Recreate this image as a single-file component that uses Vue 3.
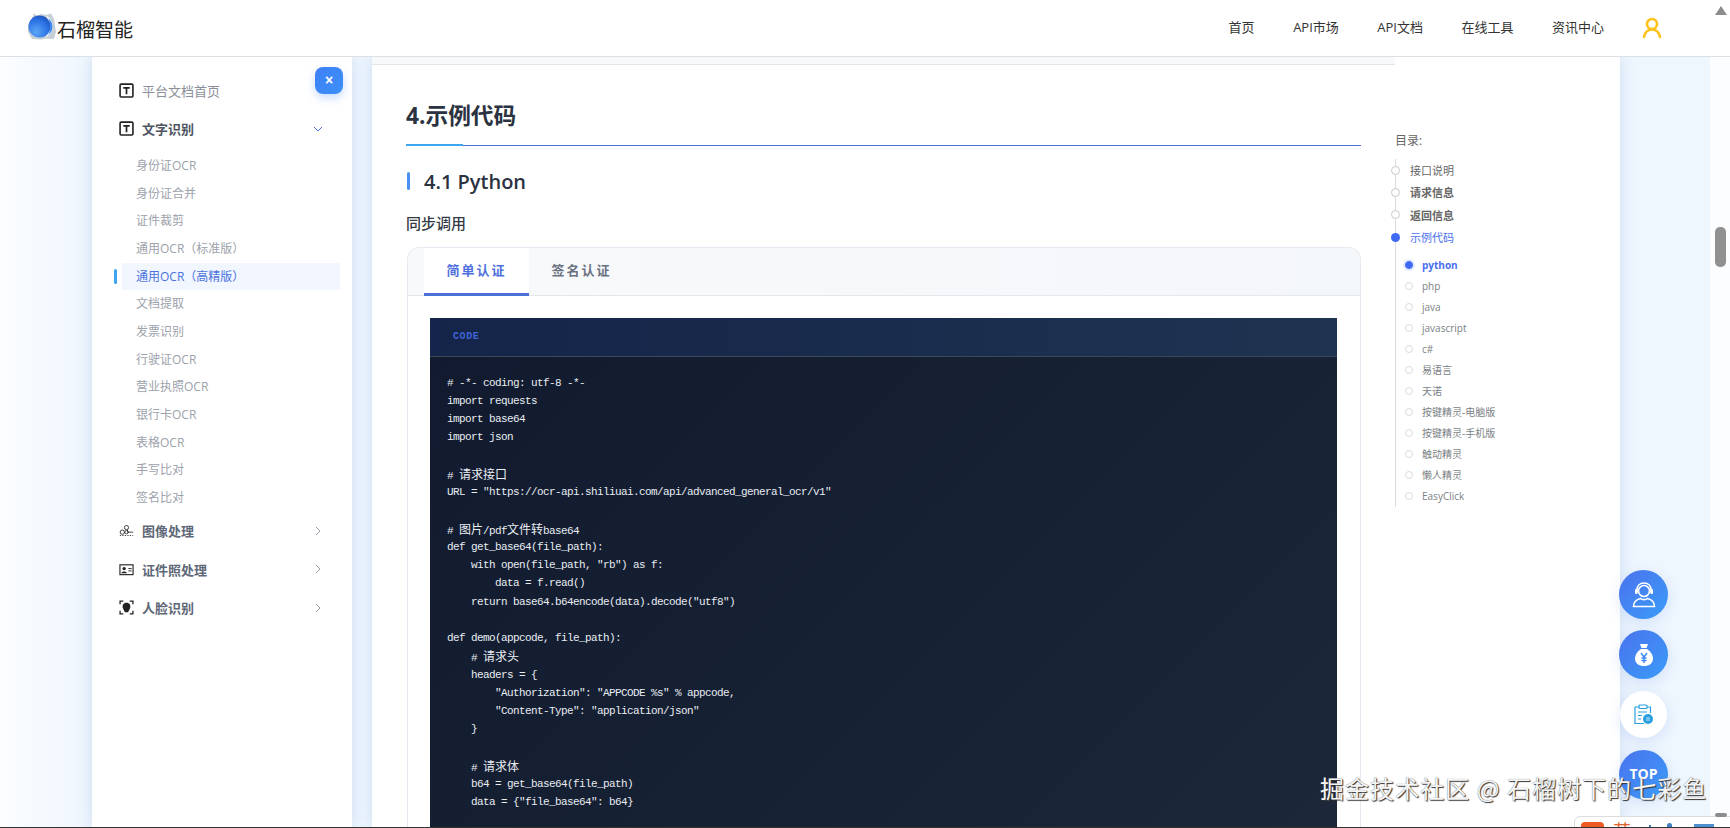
<template>
  <div class="page">
    <header class="topbar">
      <div class="brand">
        <svg class="brand-logo" width="30" height="30" viewBox="0 0 30 30">
          <defs>
            <radialGradient id="fruit" cx="0.35" cy="0.75" r="0.85">
              <stop offset="0" stop-color="#5aa6f5" />
              <stop offset="0.6" stop-color="#2f74e6" />
              <stop offset="1" stop-color="#1c4fb8" />
            </radialGradient>
          </defs>
          <path d="M5 7 L7 1.500 L10 3.500 L15 2 L19 3 L24 1.500 L27 7 L29 20 L27 27 L19 26.500 L14 27.500 L5 27 L1 20 L1 13 Z" fill="#c6ced6" />
          <path d="M19 3.500 C28 8 28 21 19 25.500 C23 20 23 9 19 3.500 Z" fill="#fff" />
          <path d="M21 6 C27 10 27 19 21 23.500 C24 18 24 11 21 6 Z" fill="#3d8df0" />
          <circle cx="12.500" cy="14.500" r="11" fill="url(#fruit)" />
        </svg>
        <span class="brand-name">石榴智能</span>
      </div>
      <nav class="nav">
        <a v-for="n in navItems" :key="n">{{ n }}</a>
      </nav>
      <svg class="user" width="20" height="22" viewBox="0 0 20 22" fill="none" stroke="#fbc31c" stroke-width="2.600" stroke-linecap="round">
        <circle cx="10" cy="7" r="5" />
        <path d="M2 20 C3 15 6 12.500 10 12.500 C14 12.500 17 15 18 20" />
      </svg>
    </header>

    <div class="body">
      <aside class="sidebar">
        <button class="collapse">×</button>
        <div class="menu-row">
          <svg class="m-icon" viewBox="0 0 14 14"><rect x="1" y="1" width="12" height="12" rx="1" fill="none" stroke="#222" stroke-width="1.500" /><path d="M4 4.500 H10 M7 4.500 V10.500" stroke="#222" stroke-width="1.600" /></svg>
          <span>平台文档首页</span>
        </div>
        <div class="menu-row strong">
          <svg class="m-icon" viewBox="0 0 14 14"><rect x="1" y="1" width="12" height="12" rx="1" fill="none" stroke="#222" stroke-width="1.500" /><path d="M4 4.500 H10 M7 4.500 V10.500" stroke="#222" stroke-width="1.600" /></svg>
          <span>文字识别</span>
          <svg class="chev" width="10" height="10" viewBox="0 0 10 10" fill="none" stroke="#4a72d8" stroke-width="1"><path d="M1 3 L5 7 L9 3" /></svg>
        </div>
        <ul class="submenu">
          <li v-for="s in subItems" :key="s" :class="{ on: s === activeSub }">{{ s }}</li>
        </ul>
        <div class="menu-row strong dim">
          <svg class="m-icon" viewBox="0 0 18 14" fill="none" stroke="#222" stroke-width="1"><circle cx="4" cy="9" r="2.600" /><circle cx="9" cy="3.500" r="2.500" /><circle cx="9" cy="9" r="2" /><path d="M10 6 L11 10 M6.500 9 H7 M11 9 H17" /><path d="M1 13 H17" stroke-dasharray="1.500 1.500" /></svg>
          <span>图像处理</span>
          <svg class="chev" width="10" height="10" viewBox="0 0 10 10" fill="none" stroke="#9aa0aa" stroke-width="1"><path d="M3 1 L7 5 L3 9" /></svg>
        </div>
        <div class="menu-row strong dim">
          <svg class="m-icon" viewBox="0 0 16 14"><rect x="1" y="2" width="14" height="10.500" fill="none" stroke="#222" stroke-width="1.200" /><circle cx="5.500" cy="6" r="1.800" fill="#222" /><path d="M2.500 11 C3 8.500 8 8.500 8.500 11 Z" fill="#222" /><path d="M10 6 H13.500 M10 8.500 H13.500" stroke="#222" stroke-width="1" /></svg>
          <span>证件照处理</span>
          <svg class="chev" width="10" height="10" viewBox="0 0 10 10" fill="none" stroke="#9aa0aa" stroke-width="1"><path d="M3 1 L7 5 L3 9" /></svg>
        </div>
        <div class="menu-row strong dim">
          <svg class="m-icon" viewBox="0 0 14 14"><path d="M1 4 V1 H4 M10 1 H13 V4 M1 10 V13 H4 M10 13 H13 V10" fill="none" stroke="#222" stroke-width="1.200" /><path d="M7 2.500 C10 2.500 11 5 10.500 7 C10 9 9 10 8.500 11.500 H5.500 C5 10 4 9 3.500 7 C3 5 4 2.500 7 2.500 Z" fill="#222" /></svg>
          <span>人脸识别</span>
          <svg class="chev" width="10" height="10" viewBox="0 0 10 10" fill="none" stroke="#9aa0aa" stroke-width="1"><path d="M3 1 L7 5 L3 9" /></svg>
        </div>
      </aside>

      <main class="content">
        <div class="strip"></div>
        <div class="columns">
          <article class="article">
            <h2 class="h-main">4.示例代码</h2>
            <h3 class="h-sub">4.1 Python</h3>
            <p class="h-small">同步调用</p>
            <section class="tabs">
              <div class="tab-head">
                <span class="tab active">简单认证</span>
                <span class="tab">签名认证</span>
              </div>
              <div class="tab-body">
                <div class="code">
                  <div class="code-head">CODE</div>
                  <pre class="code-body"><div v-for="(parts, i) in codeParts" :key="i" class="line"><template v-for="(p, j) in parts" :key="j"><span v-if="p.cjk" class="cjk">{{ p.text }}</span><template v-else>{{ p.text }}</template></template></div></pre>
                </div>
              </div>
            </section>
          </article>

          <aside class="toc">
            <div class="toc-title">目录:</div>
            <div class="toc-list">
              <div v-for="t in tocItems" :key="t.label" class="toc-item" :class="{ bold: t.bold, on: t.on }">
                <i class="dot"></i>{{ t.label }}
              </div>
              <div class="toc-sub">
                <div v-for="(s, i) in tocSub" :key="s" class="sub-item" :class="{ on: i === 0 }">
                  <i class="sub-dot"></i>{{ s }}
                </div>
              </div>
            </div>
          </aside>
        </div>
      </main>

      <div class="scroll-track">
        <span class="scroll-thumb"></span>
      </div>
    </div>

    <span class="scroll-up"></span>

    <div class="floats">
      <div class="fab">
        <svg width="28" height="28" viewBox="0 0 28 28" fill="none" stroke="#fff" stroke-width="1.600">
          <circle cx="14" cy="10" r="5.500" />
          <path d="M7 12 V9 C7 4.500 10 2 14 2 C18 2 21 4.500 21 9 V12" />
          <rect x="5" y="8" width="2.500" height="5" rx="1" fill="#fff" stroke="none" />
          <rect x="20.500" y="8" width="2.500" height="5" rx="1" fill="#fff" stroke="none" />
          <path d="M3.500 25.500 C3.500 21.500 6.500 18.500 10.500 17.500 C12 19 16 19 17.500 17.500 C21.500 18.500 24.500 21.500 24.500 25.500 Z" />
        </svg>
      </div>
      <div class="fab">
        <svg width="20" height="24" viewBox="0 0 20 24">
          <path d="M6 1 H14 L12.500 5 H7.500 Z" fill="#fff" />
          <path d="M7 6 H13 C17 8.500 19 12 19 15.500 C19 20.500 15 23 10 23 C5 23 1 20.500 1 15.500 C1 12 3 8.500 7 6 Z" fill="#fff" />
          <path d="M7 10 L10 14 L13 10 M10 14 V20 M7.500 15 H12.500 M7.500 17.500 H12.500" fill="none" stroke="#3f86f4" stroke-width="1.400" />
        </svg>
      </div>
      <div class="fab white">
        <svg width="20" height="21" viewBox="0 0 20 21" fill="none" stroke="#2a9fe0" stroke-width="1.200">
          <path d="M5 3 H1 V19.500 H10 M13 3 H16.500 V9" />
          <rect x="5" y="1" width="8" height="3.500" rx="1" />
          <path d="M4 8 H13 M4 11.500 H8 M4 15 H7" />
          <circle cx="14" cy="15" r="5" fill="#2a9fe0" stroke="none" />
          <path d="M12 14 H16 M12 16 H16" stroke="#bfe4f7" stroke-width="1" />
        </svg>
      </div>
      <div class="fab top-btn">TOP</div>
    </div>

    <div class="ime">
      <span class="ime-logo"></span>
      <span class="ime-lang">英</span>
      <span class="ime-pin"></span>
      <span class="ime-user"></span>
      <span class="ime-key"></span>
    </div>
    <span class="ime-handle"></span>

    <div class="watermark">掘金技术社区 @ 石榴树下的七彩鱼</div>
  </div>
</template>

<script setup>
const navItems = ['首页', 'API市场', 'API文档', '在线工具', '资讯中心']
const subItems = ['身份证OCR', '身份证合并', '证件裁剪', '通用OCR（标准版）', '通用OCR（高精版）', '文档提取', '发票识别', '行驶证OCR', '营业执照OCR', '银行卡OCR', '表格OCR', '手写比对', '签名比对']
const activeSub = '通用OCR（高精版）'

const tocItems = [
  { label: '接口说明' },
  { label: '请求信息', bold: true },
  { label: '返回信息', bold: true },
  { label: '示例代码', on: true },
]
const tocSub = ['python', 'php', 'java', 'javascript', 'c#', '易语言', '天诺', '按键精灵-电脑版', '按键精灵-手机版', '触动精灵', '懒人精灵', 'EasyClick']

const code = `# -*- coding: utf-8 -*-
import requests
import base64
import json

# 请求接口
URL = "https://ocr-api.shiliuai.com/api/advanced_general_ocr/v1"

# 图片/pdf文件转base64
def get_base64(file_path):
    with open(file_path, "rb") as f:
        data = f.read()
    return base64.b64encode(data).decode("utf8")

def demo(appcode, file_path):
    # 请求头
    headers = {
        "Authorization": "APPCODE %s" % appcode,
        "Content-Type": "application/json"
    }

    # 请求体
    b64 = get_base64(file_path)
    data = {"file_base64": b64}

`

// chinese runs get their own size, the latin part is squeezed to 6px a char
const codeParts = code.split('\n').map((line) => {
  if (!line) return [{ text: ' ' }]
  return line.split(/([\u4e00-\u9fff]+)/).filter(Boolean).map((text) => ({
    text,
    cjk: /[\u4e00-\u9fff]/.test(text),
  }))
})
</script>

<style>
html, body {
  margin: 0;
  overflow: hidden;
}
</style>

<style scoped>
.page {
  position: relative;
  width: 1730px;
  height: 828px;
  overflow: hidden;
  display: flex;
  flex-direction: column;
  font-family: "Open Sans", "Noto Sans CJK SC", sans-serif;
  background: linear-gradient(90deg, #fbfdff 0, #eef6fe 92px);
  border-bottom: 1px solid #333;
  box-sizing: border-box;
}
.topbar {
  flex: none;
  height: 57px;
  box-sizing: border-box;
  display: flex;
  align-items: center;
  background: #fff;
  border-bottom: 1px solid #dcdfe3;
  padding: 0 68px 0 27px;
  position: relative;
  z-index: 2;
}
.brand {
  display: flex;
  align-items: center;
  margin-right: auto;
}
.brand-logo {
  margin-bottom: 2px;
}
.brand-name {
  font-size: 19px;
  color: #222;
  line-height: 30px;
  margin-top: 3px;
}
.nav {
  display: flex;
  gap: 38.500px;
  margin-right: 38px;
  margin-bottom: 4px;
}
.nav a {
  font-size: 13px;
  color: #333;
}
.user {
  display: block;
}
.body {
  flex: 1;
  min-height: 0;
  display: flex;
  padding-left: 92px;
}
.sidebar {
  position: relative;
  flex: none;
  width: 260px;
  background: #fff;
  box-shadow: 0 0 14px rgba(90, 130, 200, 0.22);
  padding-top: 16px;
  box-sizing: border-box;
}
.collapse {
  position: absolute;
  left: 223px;
  top: 10px;
  width: 28px;
  height: 27px;
  border: 0;
  padding: 0;
  border-radius: 8px;
  background: linear-gradient(135deg, #3f80f5, #3b90f8);
  color: #fff;
  font-size: 14px;
  font-weight: 700;
  line-height: 27px;
  box-shadow: 0 4px 8px rgba(60, 130, 245, 0.28);
  font-family: "Liberation Sans", sans-serif;
}
.menu-row {
  display: flex;
  align-items: center;
  height: 38.500px;
  box-sizing: border-box;
  padding: 0 0 4px 27px;
  font-size: 13px;
  color: #8a8f99;
  position: relative;
}
.menu-row.strong {
  font-weight: 700;
  color: #4d5562;
}
.menu-row.dim {
  color: #5f6878;
}
.m-icon {
  width: 15px;
  height: 15px;
  flex: none;
  margin-right: 8px;
}
.chev {
  position: absolute;
  left: 221px;
  top: 12px;
}
.submenu {
  list-style: none;
  margin: 2px 0;
  padding: 0;
}
.submenu li {
  position: relative;
  height: 27.670px;
  line-height: 27px;
  margin-left: 30px;
  width: 218px;
  padding-left: 14px;
  box-sizing: border-box;
  font-size: 12px;
  color: #9da2ab;
}
.submenu li.on {
  color: #4a72e0;
  background: #f2f6fe;
}
.submenu li.on::before {
  content: "";
  position: absolute;
  left: -8px;
  top: 6px;
  width: 3px;
  height: 15px;
  border-radius: 2px;
  background: #3ea6f0;
}
.content {
  flex: none;
  margin-left: 20px;
  width: 1248px;
  background: #fff;
  box-shadow: 0 0 14px rgba(90, 130, 200, 0.22);
  overflow: hidden;
  display: flex;
  flex-direction: column;
}
.strip {
  flex: none;
  width: 1023px;
  height: 8px;
  background: #f7f8f9;
  border-bottom: 1px solid #e2e4e7;
  box-sizing: border-box;
}
.columns {
  flex: 1;
  min-height: 0;
  display: flex;
}
.article {
  flex: none;
  width: 955px;
  margin-left: 34px;
}
.h-main {
  margin: 29px 0 0;
  height: 51.500px;
  font-size: 22.700px;
  line-height: 43px;
  font-weight: 700;
  color: #2b3240;
  box-sizing: border-box;
  border-bottom: 1px solid #4a72d8;
  position: relative;
}
.h-main::after {
  content: "";
  position: absolute;
  left: 0;
  bottom: -1px;
  width: 57px;
  height: 2px;
  background: #3ea6f0;
}
.h-sub {
  margin: 25.500px 0 0;
  font-size: 20px;
  line-height: 21px;
  font-weight: 600;
  color: #2b3240;
  padding-left: 18px;
  position: relative;
}
.h-sub::before {
  content: "";
  position: absolute;
  left: 1px;
  top: 1px;
  width: 3px;
  height: 18px;
  border-radius: 2px;
  background: #4a90f0;
}
.h-small {
  margin: 20px 0 0;
  font-size: 15px;
  line-height: 22px;
  font-weight: 500;
  color: #333a46;
}
.tabs {
  margin: 12.500px 0 0 1px;
  border: 1px solid #e6e9ef;
  border-bottom: 0;
  border-radius: 12px 12px 0 0;
  overflow: hidden;
}
.tab-head {
  display: flex;
  height: 48px;
  padding-left: 16px;
  box-sizing: border-box;
  background: linear-gradient(90deg, #f8f9fb, #f4f7fa);
  border-bottom: 1px solid #e4e7ec;
}
.tab {
  width: 105px;
  height: 48px;
  box-sizing: border-box;
  text-align: center;
  font-size: 13px;
  font-weight: 700;
  line-height: 44px;
  letter-spacing: 2px;
  color: #6a7280;
}
.tab.active {
  background: #fff;
  color: #4f6fdc;
  border-bottom: 3px solid #4a6fd6;
}
.tab-body {
  padding: 22px 23px 0 22px;
  background: #fff;
}
.code {
  background: #141c30;
}
.code-head {
  height: 39px;
  box-sizing: border-box;
  padding-left: 23px;
  font-family: "Liberation Mono", monospace;
  font-size: 10px;
  font-weight: 700;
  line-height: 38px;
  letter-spacing: 0.600px;
  color: #3f66d8;
  background: linear-gradient(90deg, #15244a, #1e3450);
  border-bottom: 1px solid #3c4758;
}
.code-body {
  margin: 0;
  padding: 17px 17px 0;
  height: 470px;
  box-sizing: border-box;
  background: linear-gradient(135deg, #111a2e, #1c2739);
  color: #e9edf2;
  font-family: "Liberation Mono", monospace;
  font-size: 11px;
  letter-spacing: -0.600px;
}
.line {
  height: 18.250px;
  line-height: 18.250px;
  white-space: pre;
}
.cjk {
  font-family: "Noto Sans CJK SC", sans-serif;
  font-size: 12px;
  letter-spacing: 0;
}
.toc {
  flex: none;
  margin-left: 34px;
  padding-top: 67px;
  width: 200px;
}
.toc-title {
  font-size: 12px;
  line-height: 18px;
  color: #666;
}
.toc-list {
  margin-top: 9px;
  height: 348px;
  border-left: 1px solid #dcdcdc;
}
.toc-item {
  display: flex;
  align-items: center;
  height: 22.300px;
  font-size: 11px;
  color: #666;
  margin-left: -5px;
}
.toc-item.bold {
  font-weight: 700;
}
.toc-item.on {
  color: #4a6ff0;
}
.dot {
  flex: none;
  width: 7px;
  height: 7px;
  border: 1px solid #c8c8c8;
  border-radius: 50%;
  background: #fff;
  margin-right: 10px;
}
.on > .dot {
  width: 9px;
  height: 9px;
  border: 0;
  background: #3f6af5;
}
.toc-sub {
  margin-top: 6px;
  padding-left: 9px;
}
.sub-item {
  display: flex;
  align-items: center;
  height: 21px;
  font-size: 10px;
  color: #7b7f86;
}
.sub-item.on {
  color: #4a6ff0;
  font-weight: 700;
}
.sub-dot {
  flex: none;
  width: 6px;
  height: 6px;
  border: 1px solid #dcdcdc;
  border-radius: 50%;
  background: #fff;
  margin-right: 9px;
}
.sub-item.on .sub-dot {
  border-color: #3f6af5;
  background: #3f6af5;
  box-shadow: 0 0 0 2px rgba(63, 106, 245, 0.14);
}
.scroll-track {
  margin-left: auto;
  flex: none;
  width: 20px;
  background: #fcfdfe;
  position: relative;
}
.scroll-thumb {
  position: absolute;
  left: 5px;
  top: 170px;
  width: 11px;
  height: 40px;
  border-radius: 5px;
  background: #909090;
}
.scroll-up {
  position: absolute;
  left: 1715px;
  top: 6px;
  z-index: 3;
  width: 0;
  height: 0;
  border-left: 6px solid transparent;
  border-right: 6px solid transparent;
  border-bottom: 9px solid #8c8c8c;
}
.floats {
  position: absolute;
  left: 1619px;
  top: 570px;
  display: flex;
  flex-direction: column;
  align-items: center;
  gap: 11px;
  width: 49px;
}
.fab {
  width: 49px;
  height: 49px;
  flex: none;
  border-radius: 50%;
  display: flex;
  align-items: center;
  justify-content: center;
  background: linear-gradient(135deg, #4b72ee, #3a9cf8);
  box-shadow: 0 4px 14px rgba(70, 120, 230, 0.16);
}
.fab.white {
  width: 47px;
  height: 47px;
  background: #fff;
  margin: 1px 0;
}
.top-btn {
  color: #fff;
  font-size: 14px;
  font-weight: 700;
  padding-bottom: 2px;
  box-sizing: border-box;
}
.ime {
  position: absolute;
  left: 1574px;
  top: 816px;
  width: 160px;
  height: 20px;
  background: #fff;
  border: 1px solid #dcdcdc;
  border-radius: 6px 0 0 0;
  overflow: hidden;
  box-sizing: border-box;
}
.ime span {
  position: absolute;
}
.ime-logo {
  left: 6px;
  top: 5px;
  width: 23px;
  height: 16px;
  border-radius: 4px;
  background: #ee5a24;
}
.ime-lang {
  left: 38px;
  top: 2px;
  font-size: 18px;
  line-height: 24px;
  color: #e2632a;
}
.ime-pin {
  left: 74px;
  top: 8px;
  width: 2px;
  height: 10px;
  background: #3f7fc4;
}
.ime-user {
  left: 92px;
  top: 6px;
  width: 5px;
  height: 12px;
  border-radius: 3px;
  background: #3f7fc4;
}
.ime-key {
  left: 119px;
  top: 7px;
  width: 20px;
  height: 10px;
  background: #4d8fd0;
}
.ime-handle {
  position: absolute;
  left: 1715px;
  top: 813px;
  width: 12px;
  height: 4px;
  border-radius: 2px;
  background: #8c8c8c;
}
.watermark {
  position: absolute;
  left: 1320px;
  top: 771px;
  font-family: "Noto Sans CJK SC", sans-serif;
  font-size: 24px;
  line-height: 34px;
  letter-spacing: 1.050px;
  white-space: nowrap;
  color: #f5f5f5;
  text-shadow: 1px 1px 1px #333, 0 0 1px #666;
}
</style>
